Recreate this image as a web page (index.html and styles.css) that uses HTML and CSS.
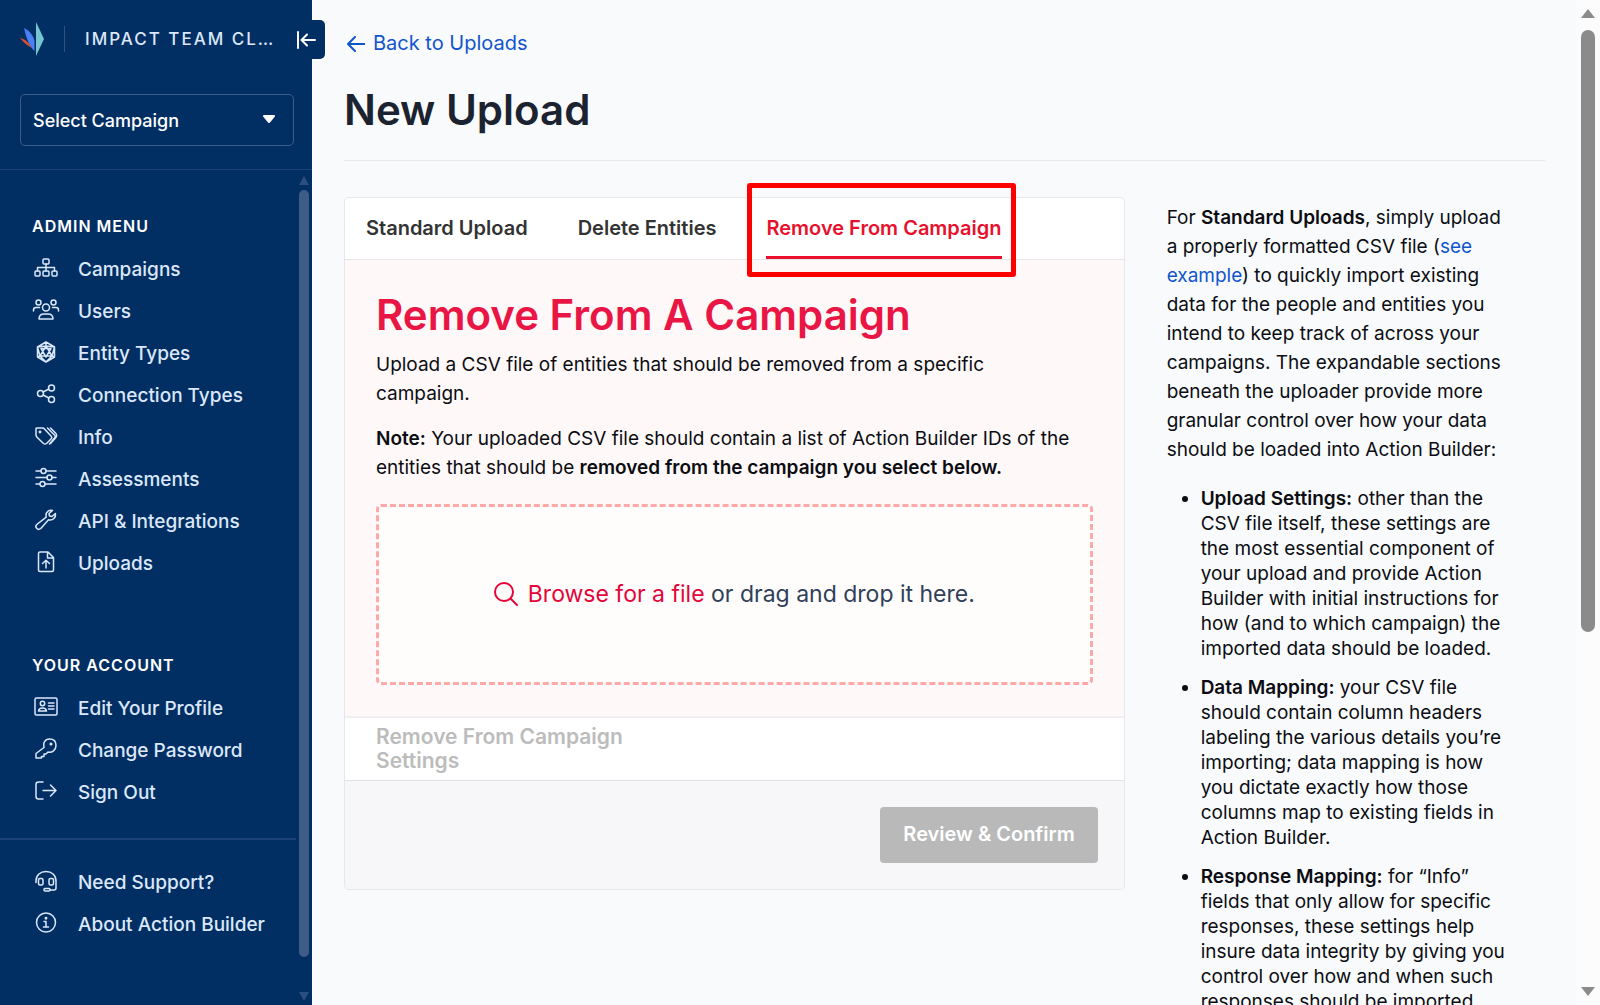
FILE: index.html
```html
<!DOCTYPE html>
<html lang="en">
<head>
	<meta charset="UTF-8">
	<title>New Upload</title>
	<link rel="stylesheet" href="styles.css">
</head>
<body>
	<div id="sidebar">
		<div class="brand">
			<svg class="logo" viewBox="0 0 24 34"><path d="M16 0l8 17-8 17z" fill="#74c5d0"/><path d="M4 6c6 3 9.500 8 10.500 13v10C9 24 6 15 4 6z" fill="#4a80f5"/><path d="M0 16c5 1 9 4 11.500 10C7 23 3 20 0 16z" fill="#d8502a"/></svg>
			<span class="team">IMPACT TEAM CLEVELAND</span>
			<button type="button" class="collapse" aria-label="Collapse menu"><svg viewBox="0 0 20 18"><path d="M2 1v16M19 9H6M11 3.500L5.500 9l5.500 5.500"/></svg></button>
		</div>
		<div class="campaign">
			<select aria-label="Campaign"><option>Select Campaign</option></select>
			<svg viewBox="0 0 14 9"><path d="M2 1h10l-5 6z"/></svg>
		</div>
		<div class="menu">
			<div class="links">
				<h2>ADMIN MENU</h2>
				<ul>
					<li><a href="#"><svg viewBox="0 0 28 24"><rect x="11" y="3" width="6" height="5" rx="1"/><rect x="3" y="15" width="5" height="5" rx="1"/><rect x="11" y="15" width="6" height="5" rx="1"/><rect x="20" y="15" width="5" height="5" rx="1"/><path d="M14 8v7M5.500 15v-3.500h17V15"/></svg>Campaigns</a></li>
					<li><a href="#"><svg viewBox="0 0 28 24"><circle cx="6.500" cy="4.500" r="2.500"/><circle cx="21.500" cy="4.500" r="2.500"/><circle cx="14" cy="9.500" r="3.500"/><path d="M7 21c0-3 2-5 5-5h4c3 0 5 2 5 5zM1.500 13v-1c0-1.500 1-2.500 2.500-2.500h3.500M26.500 13v-1c0-1.500-1-2.500-2.500-2.500h-3.500"/></svg>Users</a></li>
					<li><a href="#"><svg viewBox="0 0 28 24"><path d="M14 2l8.500 5v10L14 22l-8.500-5V7zM14 2v4M14 6l-8.500 1M14 6l8.500 1M5.500 7L8 16l-2.500 1M22.500 7L20 16l2.500 1M8 16h12M8 16l6 6 6-6M14 6l-6 10M14 6l6 10M9 8.500h10L14 17z"/></svg>Entity Types</a></li>
					<li><a href="#"><svg viewBox="0 0 28 24"><circle cx="8.500" cy="11.500" r="3"/><circle cx="19.500" cy="6" r="3"/><circle cx="19.500" cy="17.500" r="3"/><path d="M11 10l6-3M11 13l6 3"/></svg>Connection Types</a></li>
					<li><a href="#"><svg viewBox="0 0 28 24"><path d="M4 4.500v6.500c0 1 .3 1.500 1 2.200l6.500 6.300c1 .8 2 .8 3 0l4.500-4.500c1-1 1-2 0-3L12.500 5C12 4.300 11.500 4 10.500 4H4.500zM15.500 4l7 7c1 1 1 2 0 3l-5 6M18.500 4l5 5c1.500 1.500 1.500 3.500 0 5l-5 5.500"/><circle cx="8" cy="8" r=".7"/></svg>Info</a></li>
					<li><a href="#"><svg viewBox="0 0 28 24"><path d="M4 5h5M14 5h10M4 11.500h11M20 11.500h4M4 18h3.500M13 18h11"/><circle cx="11.500" cy="5" r="2.500"/><circle cx="17.500" cy="11.500" r="2.500"/><circle cx="10.500" cy="18" r="2.500"/></svg>Assessments</a></li>
					<li><a href="#"><svg viewBox="0 0 28 24"><path d="M20.500 2.500c-3-1-6.500 1-6.500 5 0 .8.100 1.200.200 1.700L4.800 16.500c-1.500 1.500-1 3 0 4s2.500 1.200 4 0l7.700-8.800c4 1 7.500-1.500 6.900-6.200L20 8.500 17.500 8 17 5.500z"/></svg>API &amp; Integrations</a></li>
					<li><a href="#"><svg viewBox="0 0 28 24"><path d="M8 2h8l5.500 5.500V20c0 1-.5 1.500-1.500 1.500H8c-1 0-1.500-.5-1.500-1.500V3.500C6.500 2.500 7 2 8 2zM15.500 2v6h6M14 18v-7.500M10.500 13.500L14 10.200l3.500 3.300"/></svg>Uploads</a></li>
				</ul>
				<h2>YOUR ACCOUNT</h2>
				<ul>
					<li><a href="#"><svg viewBox="0 0 28 24"><rect x="3" y="3" width="22" height="17" rx="1.500"/><circle cx="10.500" cy="8.500" r="2.200"/><path d="M6.500 16c.3-2 1.300-3 4-3s3.700 1 4 3zM16.500 8h5.500M16.500 11h5.500M16.500 14h5.500"/></svg>Edit Your Profile</a></li>
					<li><a href="#"><svg viewBox="0 0 28 24"><path d="M12 10.500C10.500 6 13 2 17.500 2S24 5 24 8.500c0 4.500-4 7.500-8 6.500l-2 2h-2v2.500H9.500V21H4v-4.500z"/><circle cx="19" cy="7" r=".8"/></svg>Change Password</a></li>
					<li><a href="#"><svg viewBox="0 0 28 24"><path d="M11 3H6.500C5 3 4 4 4 5.500v12C4 19 5 20 6.500 20H11M11 11.500h13M18.500 6l5.500 5.500-5.500 5.500"/></svg>Sign Out</a></li>
				</ul>
				<ul class="help">
					<li><a href="#"><svg viewBox="0 0 28 24"><path d="M4 13.500V12c0-6 4.500-9.500 10-9.500S24 6 24 12v7c0 1.300-.7 2-2 2h-4"/><rect x="6.500" y="9.500" width="4.500" height="6.500" rx="1.500"/><rect x="17" y="9.500" width="4.500" height="6.500" rx="1.500"/><rect x="12" y="19.500" width="6" height="2.500" rx="1"/></svg>Need Support?</a></li>
					<li><a href="#"><svg viewBox="0 0 28 24"><circle cx="14" cy="11.500" r="9.500"/><path d="M12 10.500h2V16M11.500 16h5"/><circle cx="14" cy="7.200" r=".7"/></svg>About Action Builder</a></li>
				</ul>
			</div>
			<div class="scroll side-scroll"><i class="up"></i><i class="thumb"></i><i class="down"></i></div>
		</div>
	</div>

	<div id="main">
		<a href="#" class="back"><svg viewBox="0 0 18 16"><path d="M17.500 8H1M8 1L1 8l7 7"/></svg>Back to Uploads</a>
		<h1>New Upload</h1>
		<div class="content">
			<form class="card">
				<div class="tabs">
					<button type="button">Standard Upload</button>
					<button type="button">Delete Entities</button>
					<button type="button" class="active">Remove From Campaign</button>
				</div>
				<div class="panel">
					<h2>Remove From A Campaign</h2>
					<p>Upload a CSV file of entities that should be removed from a specific campaign.</p>
					<p><b>Note:</b> Your uploaded CSV file should contain a list of Action Builder IDs of the entities that should be <b>removed from the campaign you select below.</b></p>
					<div class="drop">
						<input type="file" id="file">
						<svg viewBox="0 0 24 24"><circle cx="10" cy="10" r="9"/><path d="M16.500 16.500L23 23"/></svg>
						<span><label for="file">Browse for a file</label> or drag and drop it here.</span>
					</div>
				</div>
				<div class="settings"><h3>Remove From Campaign Settings</h3></div>
				<div class="foot"><button type="button" disabled>Review &amp; Confirm</button></div>
			</form>
			<div class="guide">
				<p>For <b>Standard Uploads</b>, simply upload a properly formatted CSV file (<a href="#">see example</a>) to quickly import existing data for the people and entities you intend to keep track of across your campaigns. The expandable sections beneath the uploader provide more granular control over how your data should be loaded into Action Builder:</p>
				<ul>
					<li><b>Upload Settings:</b> other than the CSV file itself, these settings are the most essential component of your upload and provide Action Builder with initial instructions for how (and to which campaign) the imported data should be loaded.</li>
					<li><b>Data Mapping:</b> your CSV file should contain column headers labeling the various details you’re importing; data mapping is how you dictate exactly how those columns map to existing fields in Action Builder.</li>
					<li><b>Response Mapping:</b> for “Info” fields that only allow for specific responses, these settings help insure data integrity by giving you control over how and when such responses should be imported.</li>
				</ul>
			</div>
		</div>
	</div>
	<div class="scroll page-scroll"><i class="up"></i><i class="thumb"></i><i class="down"></i></div>
</body>
</html>
```

FILE: styles.css
```css
*{margin:0;padding:0;box-sizing:border-box;}
body{display:flex;height:100vh;overflow:hidden;background:#f9fafc;font:19px/29px Inter,"Liberation Sans",sans-serif;color:#0b0d12;}
a{text-decoration:none;color:#1155cc;}
ul{list-style:none;}
b{font-weight:600;}
button,select,input{font:inherit;}
button{border:0;background:none;cursor:pointer;}
svg{flex:none;fill:none;stroke-linecap:round;stroke-linejoin:round;}

/* sidebar */
#sidebar{flex:0 0 312px;min-width:0;display:flex;flex-direction:column;background:#022f63;color:#fff;position:relative;z-index:1;}
.brand{display:flex;align-items:center;height:78px;padding:0 28px 0 20px;}
.logo{width:24px;height:34px;margin-right:20px;}
.team{flex:1;min-width:0;border-left:1px solid #2f5280;padding-left:20px;line-height:26px;font-size:17px;font-weight:500;letter-spacing:2px;color:#dbe7fa;white-space:nowrap;overflow:hidden;text-overflow:ellipsis;}
.collapse{position:absolute;top:20px;right:-13px;width:39px;height:39px;border-radius:0 5px 5px 0;background:#022f63;}
.collapse svg{display:block;width:20px;height:18px;margin-left:10px;stroke:#fff;stroke-width:2;}
.campaign{position:relative;padding:16px 18px 23px 20px;border-bottom:1px solid #1d427a;}
.campaign select{display:block;width:100%;height:52px;padding:0 12px;border:1px solid #3f5c88;border-radius:5px;background:none;color:#fff;font-size:18px;font-weight:500;appearance:none;}
.campaign svg{position:absolute;right:36px;top:37px;width:14px;height:9px;fill:#fff;stroke:#fff;stroke-width:2;}
.menu{flex:1;display:flex;min-height:0;}
.links{flex:1;padding-top:44px;overflow:hidden;}
.links h2{padding-left:32px;font-size:16px;line-height:24px;letter-spacing:1px;font-weight:600;}
.links ul{padding:10px 0 69px 32px;}
.links a{display:flex;align-items:center;gap:18px;height:42px;font-size:19px;font-weight:500;color:#dbe7fa;}
.links svg{width:28px;height:24px;margin-bottom:2px;stroke:#dbe7fa;stroke-width:1.5;}
.links .help{margin-top:-44px;border-top:2px solid #1d427a;padding-top:21px;}

/* scroll bars */
.scroll{display:flex;flex-direction:column;align-items:center;}
.scroll .thumb{flex:none;width:100%;border-radius:7px;}
.scroll .up,.scroll .down{border:5px solid transparent;border-top:0;border-bottom:9px solid;border-left-color:transparent;border-right-color:transparent;}
.scroll .down{margin-top:auto;border-top:9px solid;border-bottom:0;}
.side-scroll{width:10px;margin:6px 3px 4px 3px;color:#2b4f80;}
.side-scroll .thumb{height:93%;margin-top:5px;background:#3f5c88;}
.page-scroll{flex:0 0 24px;padding:9px 5px;background:#fcfcfc;color:#8b8b8b;}
.page-scroll .thumb{height:61%;margin-top:12px;background:#8b8b8b;}
.page-scroll .up,.page-scroll .down{border-left-width:7px;border-right-width:7px;}

/* main column */
#main{flex:1;min-width:0;padding:29px 31px 0 32px;overflow:hidden;}
.back{display:inline-flex;align-items:center;gap:8px;padding-left:3px;font-size:20px;}
.back svg{width:18px;height:16px;stroke:#1155cc;stroke-width:2;}
h1,.panel h2{font-size:42px;font-weight:600;}
h1{margin-bottom:36px;padding:22px 0 23px;border-bottom:1px solid #e5e7eb;line-height:55px;color:#1b2330;}
.content{display:flex;align-items:flex-start;}
.card{flex:0 0 65%;border:1px solid #e5e7eb;border-radius:5px;background:#fff;}
.tabs{display:flex;gap:50px;padding:0 21px;border-bottom:1px solid #e5e7eb;}
.tabs button{height:61px;padding-top:4px;border-bottom:3px solid transparent;font-size:20px;font-weight:600;color:#333;}
.tabs .active{position:relative;color:#e8112d;border-color:#e8112d;}
.tabs .active:after{content:"";position:absolute;top:-15px;left:-19px;right:-14px;bottom:-21px;border:5px solid #f00;border-radius:3px;}
.panel{padding:31px;background:#fff8f8;border-bottom:2px solid #f0f0f2;}
.panel h2{line-height:48px;color:#e91645;}
.panel p{margin:11px 0 16px;padding-right:14px;}
.drop{display:flex;justify-content:center;align-items:center;gap:10px;position:relative;height:181px;margin-top:22px;border:3px dashed #ffa8a8;border-radius:5px;background:#fffdfc;font-size:23px;color:#2f4058;}
.drop input{position:absolute;opacity:0;width:1px;height:1px;}
.drop svg{width:24px;height:24px;stroke:#e3063a;stroke-width:2;}
.drop label{color:#e3063a;cursor:pointer;}
.settings{padding:7px 31px;border-bottom:1px solid #e0e2e6;}
.settings h3{width:280px;font-size:21px;line-height:24px;font-weight:600;color:#bcbcbc;}
.foot{padding:26px;text-align:right;background:#f7f7f9;border-radius:0 0 5px 5px;}
.foot button{height:56px;padding:0 23px;border-radius:4px;background:#b9b9b9;color:#fff;font-size:20px;font-weight:600;}
.guide{flex:1;padding:6px 34px 0 42px;}
.guide ul{padding:22px 0 0 34px;list-style:disc;line-height:25px;}
.guide li{margin-bottom:14px;}
```
